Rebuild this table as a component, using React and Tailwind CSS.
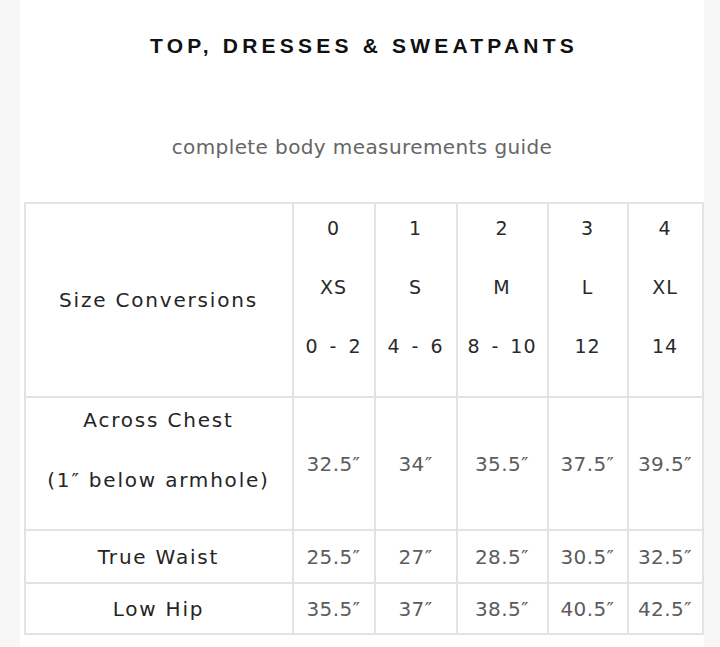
const SIZES = [
  { n: "0", s: "XS", r: "0 - 2" },
  { n: "1", s: "S", r: "4 - 6" },
  { n: "2", s: "M", r: "8 - 10" },
  { n: "3", s: "L", r: "12" },
  { n: "4", s: "XL", r: "14" },
];

const ROWS = [
  { label: "True Waist", values: ["25.5″", "27″", "28.5″", "30.5″", "32.5″"], h: "h-[53px]" },
  { label: "Low Hip", values: ["35.5″", "37″", "38.5″", "40.5″", "42.5″"], h: "h-[51px]" },
];

const CHEST = ["32.5″", "34″", "35.5″", "37.5″", "39.5″"];
const COLS = ["w-[82px]", "w-[82px]", "w-[91px]", "w-[80px]", "w-[75px]"];

const cell = "border-2 border-[#e3e3e3]";
const label = "text-[20px] tracking-[0.09em] text-[#252525]";
const value = "text-[20px] tracking-[0.02em] text-[#5c5c5c]";

export default function App() {
  return (
    <div className="w-[720px] h-[647px] bg-[#f7f7f7] font-['DejaVu_Sans',sans-serif]">
      <div className="ml-[20px] w-[684px] h-full bg-white flex flex-col items-center">
        <h1 className="mt-[34px] ml-[4px] text-[21px] leading-[24px] font-bold tracking-[0.2em] text-[#111] font-['Liberation_Sans',Arial,sans-serif]">
          TOP, DRESSES &amp; SWEATPANTS
        </h1>
        <p className="mt-[77px] text-[20px] leading-[24px] tracking-[0.02em] text-[#666]">
          complete body measurements guide
        </p>

        <table className="mt-[43px] ml-[3px] border-collapse table-fixed text-center">
          <tbody>
            <tr className="h-[194px]">
              <td className={`w-[268px] ${cell} ${label}`}>Size Conversions</td>
              {SIZES.map((c, i) => (
                <td key={c.n} className={`${COLS[i]} ${cell} align-top pt-[12px] text-[19px] tracking-[0.05em] [word-spacing:4px] text-[#2a2a2a]`}>
                  <div className="flex flex-col gap-[35px] leading-[24px] whitespace-nowrap">
                    <span>{c.n}</span>
                    <span>{c.s}</span>
                    <span>{c.r}</span>
                  </div>
                </td>
              ))}
            </tr>
            <tr className="h-[133px]">
              <td className={`${cell} align-top pt-[10px] ${label}`}>
                <div className="flex flex-col gap-[36px] leading-[24px]">
                  <span>Across Chest</span>
                  <span>(1″ below armhole)</span>
                </div>
              </td>
              {CHEST.map((v, i) => (
                <td key={i} className={`${cell} ${value}`}>
                  {v}
                </td>
              ))}
            </tr>
            {ROWS.map((row) => (
              <tr key={row.label} className={row.h}>
                <td className={`${cell} ${label}`}>{row.label}</td>
                {row.values.map((v, i) => (
                  <td key={i} className={`${cell} ${value}`}>
                    {v}
                  </td>
                ))}
              </tr>
            ))}
          </tbody>
        </table>
      </div>
    </div>
  );
}
